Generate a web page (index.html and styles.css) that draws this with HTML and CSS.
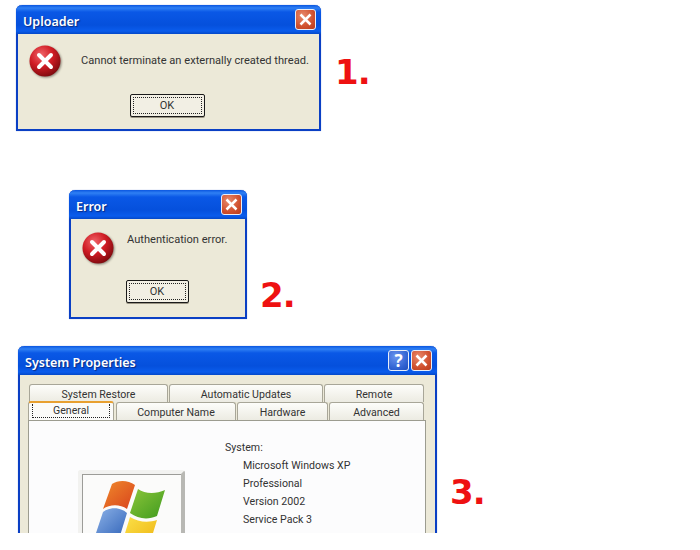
FILE: index.html
```html
<!DOCTYPE html>
<html lang="en">
<head>
<meta charset="UTF-8">
<title>XP dialogs</title>
<link rel="stylesheet" href="styles.css">
</head>
<body>

<svg class="defs" width="0" height="0">
  <defs>
    <radialGradient id="redball" cx="38%" cy="30%" r="75%">
      <stop offset="0" stop-color="#f0656a"/>
      <stop offset="0.5" stop-color="#d01c24"/>
      <stop offset="1" stop-color="#7a0a0e"/>
    </radialGradient>
    <linearGradient id="pane-red" x1="0" y1="0" x2="1" y2="1">
      <stop offset="0" stop-color="#f08a2c"/>
      <stop offset="1" stop-color="#d8431c"/>
    </linearGradient>
    <linearGradient id="pane-green" x1="0" y1="0" x2="1" y2="1">
      <stop offset="0" stop-color="#8cc63a"/>
      <stop offset="1" stop-color="#3f9a1e"/>
    </linearGradient>
    <linearGradient id="pane-blue" x1="0" y1="0" x2="1" y2="1">
      <stop offset="0" stop-color="#8fb4e8"/>
      <stop offset="1" stop-color="#2f62b8"/>
    </linearGradient>
    <linearGradient id="pane-yellow" x1="0" y1="0" x2="1" y2="1">
      <stop offset="0" stop-color="#fbe24a"/>
      <stop offset="1" stop-color="#eeb210"/>
    </linearGradient>
  </defs>
</svg>

<div class="canvas">

  <!-- 1 -->
  <div class="window win-uploader">
    <div class="title-bar">
      <span class="title">Uploader</span>
      <span class="btn btn-close"><svg viewBox="0 0 12 12"><path d="M2 2 L10 10 M10 2 L2 10"/></svg></span>
    </div>
    <div class="content msg-row">
      <svg class="err" viewBox="0 0 32 32"><circle cx="16" cy="16" r="15.5" fill="url(#redball)"/><path d="M10 10 L22 22 M22 10 L10 22"/></svg>
      <p class="msg">Cannot terminate an externally created thread.</p>
    </div>
    <div class="ok-row"><div class="ok"><span>OK</span></div></div>
  </div>
  <div class="num num-1">1.</div>

  <!-- 2 -->
  <div class="window win-error">
    <div class="title-bar">
      <span class="title">Error</span>
      <span class="btn btn-close"><svg viewBox="0 0 12 12"><path d="M2 2 L10 10 M10 2 L2 10"/></svg></span>
    </div>
    <div class="content msg-row">
      <svg class="err" viewBox="0 0 32 32"><circle cx="16" cy="16" r="15.5" fill="url(#redball)"/><path d="M10 10 L22 22 M22 10 L10 22"/></svg>
      <p class="msg">Authentication error.</p>
    </div>
    <div class="ok-row"><div class="ok"><span>OK</span></div></div>
  </div>
  <div class="num num-2">2.</div>

  <!-- 3 -->
  <div class="window win-system">
    <div class="title-bar">
      <span class="title">System Properties</span>
      <span class="btn btn-help">?</span>
      <span class="btn btn-close"><svg viewBox="0 0 12 12"><path d="M2 2 L10 10 M10 2 L2 10"/></svg></span>
    </div>
    <div class="content sys">
      <div class="tabs tabs-back">
        <div class="tab t-restore">System Restore</div>
        <div class="tab t-updates">Automatic Updates</div>
        <div class="tab t-remote">Remote</div>
      </div>
      <div class="tabs tabs-front">
        <div class="tab active t-general"><span>General</span></div>
        <div class="tab t-computer">Computer Name</div>
        <div class="tab t-hardware">Hardware</div>
        <div class="tab t-advanced">Advanced</div>
      </div>
      <div class="panel">
        <div class="logo-box">
          <svg class="flag" viewBox="0 0 72 72">
            <path fill="url(#pane-red)" d="M17 5 C23 1 33 1 40 6 L32 30 C25 25 15 25 8 30 Z"/>
            <path fill="url(#pane-green)" d="M43 10 C50 15 61 15 70 11 L62 37 C53 41 43 40 35 34 Z"/>
            <path fill="url(#pane-blue)" d="M8 33 C15 28 25 28 32 34 L24 60 C17 55 5 55 -1 60 Z"/>
            <path fill="url(#pane-yellow)" d="M35 38 C43 43 53 44 62 41 L54 67 C45 70 35 69 27 64 Z"/>
          </svg>
        </div>
        <div class="info">
          <p>System:</p>
          <p class="in">Microsoft Windows XP</p>
          <p class="in">Professional</p>
          <p class="in">Version 2002</p>
          <p class="in">Service Pack 3</p>
        </div>
      </div>
    </div>
  </div>
  <div class="num num-3">3.</div>

</div>

</body>
</html>
```

FILE: styles.css
```css
body {
  margin: 0;
  background: white;
  font-family: "Noto Sans", sans-serif;
  color: #222;
}

.defs { position: absolute; }

.canvas {
  position: relative;
  width: 700px;
  height: 533px;
  overflow: hidden;
}

/* Windows */
.window {
  position: absolute;
  box-sizing: border-box;
  display: flex;
  flex-direction: column;
  background: #ece9d8;
  border: 2px solid #0a3fc4;
  border-top: none;
  border-radius: 6px 6px 0 0;
  box-shadow: 0 0 1px #5c7ccc;
}
.win-uploader { left: 16px; top: 5px; width: 305px; height: 126px; }
.win-error { left: 69px; top: 190px; width: 178px; height: 129px; }
.win-system { left: 18px; top: 346px; width: 419px; height: 230px; }

.title-bar {
  height: 29px;
  margin: 0 -2px;
  padding: 0 5px 0 7px;
  flex-shrink: 0;
  display: flex;
  align-items: center;
  gap: 2px;
  border-radius: 6px 6px 0 0;
  background: linear-gradient(#0a56e0 0, #2f80f4 3px, #0a58e6 7px, #0550dc 20px, #0a5cec 26px, #0448c8 29px);
}
.title {
  flex: 1;
  padding-top: 3px;
  color: white;
  font-size: 12.5px;
  font-weight: 600;
  text-shadow: 1px 1px 1px #0a2a80;
}

.btn {
  box-sizing: border-box;
  width: 21px;
  height: 21px;
  display: flex;
  align-items: center;
  justify-content: center;
  border: 1px solid #e8eef8;
  border-radius: 3px;
  color: white;
}
.btn svg { width: 15px; height: 15px; }
.btn svg path { stroke: white; stroke-width: 2; fill: none; }
.btn-close { background: radial-gradient(circle at 35% 30%, #e88a6c, #d0502e 60%, #b83a1c); }
.btn-help {
  background: radial-gradient(circle at 35% 30%, #6a94ee, #2d5fd0 70%, #2250b8);
  font-size: 17px;
  font-weight: 700;
}

/* Dialog content */
.msg-row { display: flex; }
.err { width: 32px; height: 32px; flex-shrink: 0; filter: drop-shadow(1px 1px 1px #8a8578); }
.err path { stroke: white; stroke-width: 4; stroke-linecap: round; fill: none; }
.msg { margin: 0; font-size: 11.1px; font-family: Roboto, sans-serif; white-space: nowrap; color: #333; }

.win-uploader .msg-row { padding: 11px 0 0 11px; gap: 20px; }
.win-uploader .msg { padding-top: 9px; }
.win-uploader .ok-row { padding-top: 17px; padding-right: 3px; }

.win-error .msg-row { padding: 13px 0 0 11px; gap: 13px; }
.win-error .msg { padding-top: 1px; }
.win-error .ok-row { padding-top: 16px; padding-right: 2px; }

.ok-row { display: flex; justify-content: center; }
.ok {
  box-sizing: border-box;
  width: 75px;
  height: 23px;
  padding: 2px;
  border: 1px solid #1a1a1a;
  border-radius: 2px;
  background: #f2efe4;
  box-shadow: 0 1px 0 #9a9484;
  font-size: 11px;
  font-family: Roboto, sans-serif;
  color: #333;
}
.ok span {
  display: flex;
  align-items: center;
  justify-content: center;
  height: 100%;
  box-sizing: border-box;
  border: 1px dotted #222;
}
.win-error .ok { width: 63px; }

/* Tabs */
.sys { padding: 9px 9px 0 8px; }
.tabs { display: flex; height: 18px; font-size: 10.6px; font-family: Roboto, sans-serif; color: #333; }
.tabs-back { margin-left: 1px; }
.tabs-front { position: relative; z-index: 1; }
.tab {
  box-sizing: border-box;
  display: flex;
  align-items: center;
  justify-content: center;
  margin-right: 1px;
  padding-top: 1px;
  border: 1px solid #a8a698;
  border-bottom: none;
  border-radius: 3px 3px 0 0;
  background: linear-gradient(#fdfdfa, #ecebe2);
}
.t-restore { width: 139px; }
.t-updates { width: 154px; }
.t-remote { width: 100px; }
.t-general { width: 86px; margin-right: 2px; }
.t-computer { width: 120px; }
.t-hardware { width: 91px; }
.t-advanced { width: 95px; }
.tab.active {
  height: 19px;
  margin-top: -1px;
  padding: 1px 3px 2px;
  background: #fbfbf9;
  border-top: 2px solid #e8a030;
  border-color: #e8a030 #a8a698 transparent;
}
.tab.active span {
  flex: 1;
  height: 100%;
  box-sizing: border-box;
  text-align: center;
  line-height: 14px;
  border: 1px dotted #222;
  border-top: none;
}

.panel {
  position: relative;
  height: 200px;
  width: 398px;
  box-sizing: border-box;
  background: #fcfcfd;
  border: 1px solid #9c9c90;
}

.logo-box {
  position: absolute;
  left: 49px;
  top: 49px;
  width: 107px;
  height: 120px;
  box-sizing: border-box;
  padding: 5px 0 0 13px;
  background: #fbfbfa;
  border: 4px solid;
  border-color: #f2f2f0 #b8b8b4 #b8b8b4 #f2f2f0;
  border-radius: 3px;
  box-shadow: inset 1px 1px 0 #9c9c98;
}
.flag { width: 72px; height: 72px; overflow: visible; }

.info {
  position: absolute;
  left: 196px;
  top: 18px;
  font-size: 10.6px;
  font-family: Roboto, sans-serif;
  color: #333;
}
.info p { margin: 0; height: 18px; line-height: 18px; }
.info .in { margin-left: 18px; }

/* Red numbers */
.num {
  position: absolute;
  color: #ee1111;
  font-family: "DejaVu Sans", sans-serif;
  font-weight: 700;
  font-size: 34px;
  line-height: 40px;
  letter-spacing: -1px;
}
.num-1 { left: 335px; top: 52px; }
.num-2 { left: 260px; top: 275px; }
.num-3 { left: 450px; top: 472px; }
```
